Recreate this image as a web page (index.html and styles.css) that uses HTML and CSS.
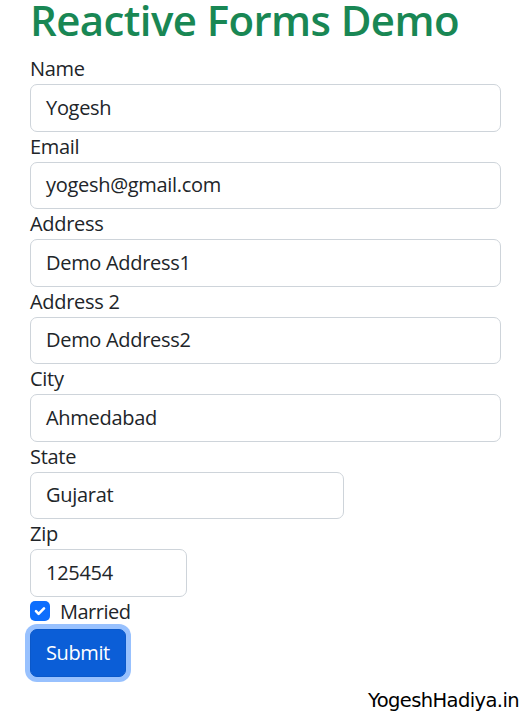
FILE: index.html
```html
<!DOCTYPE html>
<html lang="en">
<head>
<meta charset="utf-8">
<title>Reactive Forms Demo</title>
<link rel="stylesheet" href="styles.css">
</head>
<body>
<div class="container">
  <h1 class="title">Reactive Forms Demo</h1>
  <form class="form">
    <div class="group">
      <label class="label">Name</label>
      <div class="input">Yogesh</div>
    </div>
    <div class="group">
      <label class="label">Email</label>
      <div class="input">yogesh@gmail.com</div>
    </div>
    <div class="group">
      <label class="label">Address</label>
      <div class="input">Demo Address1</div>
    </div>
    <div class="group">
      <label class="label">Address 2</label>
      <div class="input">Demo Address2</div>
    </div>
    <div class="group">
      <label class="label">City</label>
      <div class="input">Ahmedabad</div>
    </div>
    <div class="group group-state">
      <label class="label">State</label>
      <div class="input">Gujarat</div>
    </div>
    <div class="group group-zip">
      <label class="label">Zip</label>
      <div class="input">125454</div>
    </div>
    <div class="check">
      <span class="check-box"><svg width="20" height="20" viewBox="0 0 20 20"><path d="M6 10.2l2.6 2.6 5.4-5.4" fill="none" stroke="#fff" stroke-width="2.6" stroke-linecap="round" stroke-linejoin="round"/></svg></span>
      <span class="check-label">Married</span>
    </div>
    <div class="actions">
      <button type="button" class="btn">Submit</button>
    </div>
  </form>
  <div class="footer">YogeshHadiya.in</div>
</div>
</body>
</html>
```

FILE: styles.css
```css
html, body {
  margin: 0;
  padding: 0;
  background: #fff;
}
body {
  font-family: "Open Sans", "Noto Sans", sans-serif;
  font-size: 20px;
  line-height: 30px;
  color: #212529;
}
.container {
  padding: 0 31px 0 30px;
}
.title {
  margin: 0 0 14px 0;
  font-size: 42px;
  line-height: 40px;
  font-weight: 600;
  color: #198754;
  letter-spacing: -0.6px;
}
.form {
  display: flex;
  flex-direction: column;
}
.group {
  display: flex;
  flex-direction: column;
}
.label {
  display: block;
  height: 30px;
  letter-spacing: -0.3px;
}
.input {
  box-sizing: border-box;
  height: 47.5px;
  padding: 7.75px 15px;
  border: 1px solid #ced4da;
  border-radius: 7px;
  background: #fff;
  letter-spacing: -0.3px;
}
.group-state .input {
  width: 66.6667%;
}
.group-zip .input {
  width: 33.3333%;
}
.check {
  display: flex;
  align-items: flex-start;
  height: 30px;
  margin-bottom: 2px;
}
.check-box {
  width: 20px;
  height: 20px;
  margin-top: 4.5px;
  border-radius: 5px;
  background: #0d6efd;
  display: flex;
}
.check-label {
  margin-left: 10px;
  letter-spacing: -0.5px;
}
.actions {
  display: flex;
}
.btn {
  box-sizing: border-box;
  height: 48.5px;
  padding: 7.5px 15px;
  font-family: inherit;
  font-size: 20px;
  line-height: 30px;
  color: #fff;
  background: #0b5ed7;
  border: 1px solid #0a58ca;
  border-radius: 7px;
  box-shadow: 0 0 0 5px rgba(49, 132, 253, 0.5);
  letter-spacing: -0.4px;
}
.footer {
  margin-top: 12px;
  text-align: right;
  margin-right: -18px;
  font-family: "DejaVu Sans", sans-serif;
  font-size: 19.5px;
  line-height: 24px;
  color: #000;
  letter-spacing: -0.6px;
}
```
